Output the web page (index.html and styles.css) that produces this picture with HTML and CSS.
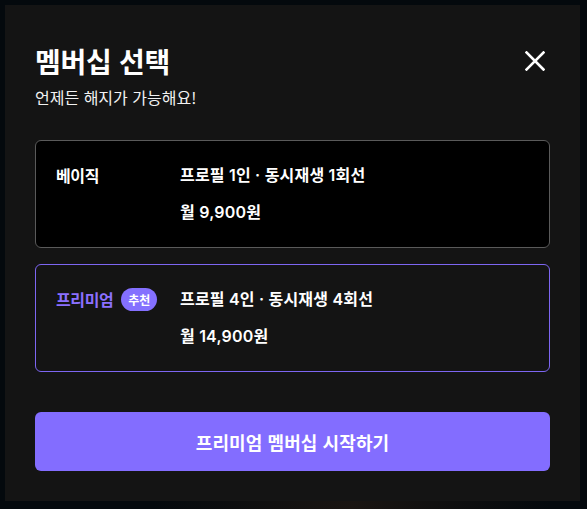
FILE: index.html
```html
<!DOCTYPE html>
<html lang="ko">
<head>
<meta charset="utf-8">
<title>멤버십 선택</title>
<link rel="stylesheet" href="styles.css">
</head>
<body>
<div class="backdrop">
  <div class="modal">
    <div class="header">
      <h1 class="title">멤버십 선택</h1>
      <button class="close" aria-label="닫기">
        <svg width="20" height="20" viewBox="0 0 20 20"><path d="M1.5 1.5 L18.5 18.5 M18.5 1.5 L1.5 18.5" stroke="#fff" stroke-width="2.6" stroke-linecap="square" fill="none"/></svg>
      </button>
    </div>
    <p class="subtitle">언제든 해지가 가능해요!</p>
    <div class="plans">
      <div class="plan basic">
        <div class="plan-name">베이직</div>
        <div class="plan-info">
          <div class="row">프로필 1인 · 동시재생 1회선</div>
          <div class="row">월 9,900원</div>
        </div>
      </div>
      <div class="plan premium">
        <div class="plan-name"><span class="name-purple">프리미엄</span><span class="badge">추천</span></div>
        <div class="plan-info">
          <div class="row">프로필 4인 · 동시재생 4회선</div>
          <div class="row">월 14,900원</div>
        </div>
      </div>
    </div>
    <button class="cta">프리미엄 멤버십 시작하기</button>
  </div>
</div>
</body>
</html>
```
FILE: styles.css
```css
html, body {
  margin: 0;
  padding: 0;
  height: 100%;
}
body {
  background: #04090d;
  font-family: "Noto Sans CJK KR", "Noto Sans", sans-serif;
  color: #fff;
}
.backdrop {
  padding: 5px 7px 8px 5px;
  background: radial-gradient(ellipse at 60% 100%, #1a1512 0%, #04090d 40%);
  height: 100%;
  box-sizing: border-box;
}
.modal {
  width: 575px;
  height: 496px;
  box-sizing: border-box;
  background: #141414;
  padding: 36px 30px 30px 30px;
  display: flex;
  flex-direction: column;
}
.header {
  display: flex;
  align-items: center;
  justify-content: space-between;
  height: 40px;
}
.title {
  margin: 0;
  font-size: 28px;
  font-weight: 700;
  line-height: 40px;
  letter-spacing: -0.3px;
}
.close {
  width: 30px;
  height: 30px;
  padding: 0;
  border: 0;
  background: transparent;
  display: flex;
  align-items: center;
  justify-content: center;
}
.subtitle {
  margin: 5px 0 0 0;
  font-size: 16px;
  line-height: 22px;
  color: #f2f2f2;
  letter-spacing: 0;
}
.plans {
  margin-top: 32px;
  display: flex;
  flex-direction: column;
  gap: 16px;
}
.plan {
  display: flex;
  border-radius: 6px;
  padding: 22px 20px 23px 20px;
}
.basic {
  background: #000;
  border: 1px solid #5a5a5a;
}
.premium {
  background: #141414;
  border: 1px solid #7d66f2;
}
.plan-name {
  width: 124px;
  flex: none;
  display: flex;
  align-items: center;
  gap: 8px;
  height: 24px;
  font-size: 16px;
  font-weight: 700;
  letter-spacing: -0.4px;
}
.name-purple {
  color: #8b70ff;
}
.badge {
  background: #8470ff;
  color: #fff;
  font-size: 12px;
  font-weight: 700;
  border-radius: 12px;
  height: 23px;
  padding: 0 7px;
  display: inline-flex;
  align-items: center;
  letter-spacing: 0;
}
.plan-info {
  display: flex;
  flex-direction: column;
  gap: 13px;
}
.row {
  font-family: "Inter", "Noto Sans CJK KR", sans-serif;
  font-size: 16px;
  line-height: 24px;
  font-weight: 600;
  letter-spacing: 0.2px;
}
.cta {
  margin-top: auto;
  height: 59px;
  border: 0;
  border-radius: 6px;
  background: #836dff;
  color: #fff;
  font-family: inherit;
  font-size: 18px;
  font-weight: 700;
  letter-spacing: 0.1px;
}
```
